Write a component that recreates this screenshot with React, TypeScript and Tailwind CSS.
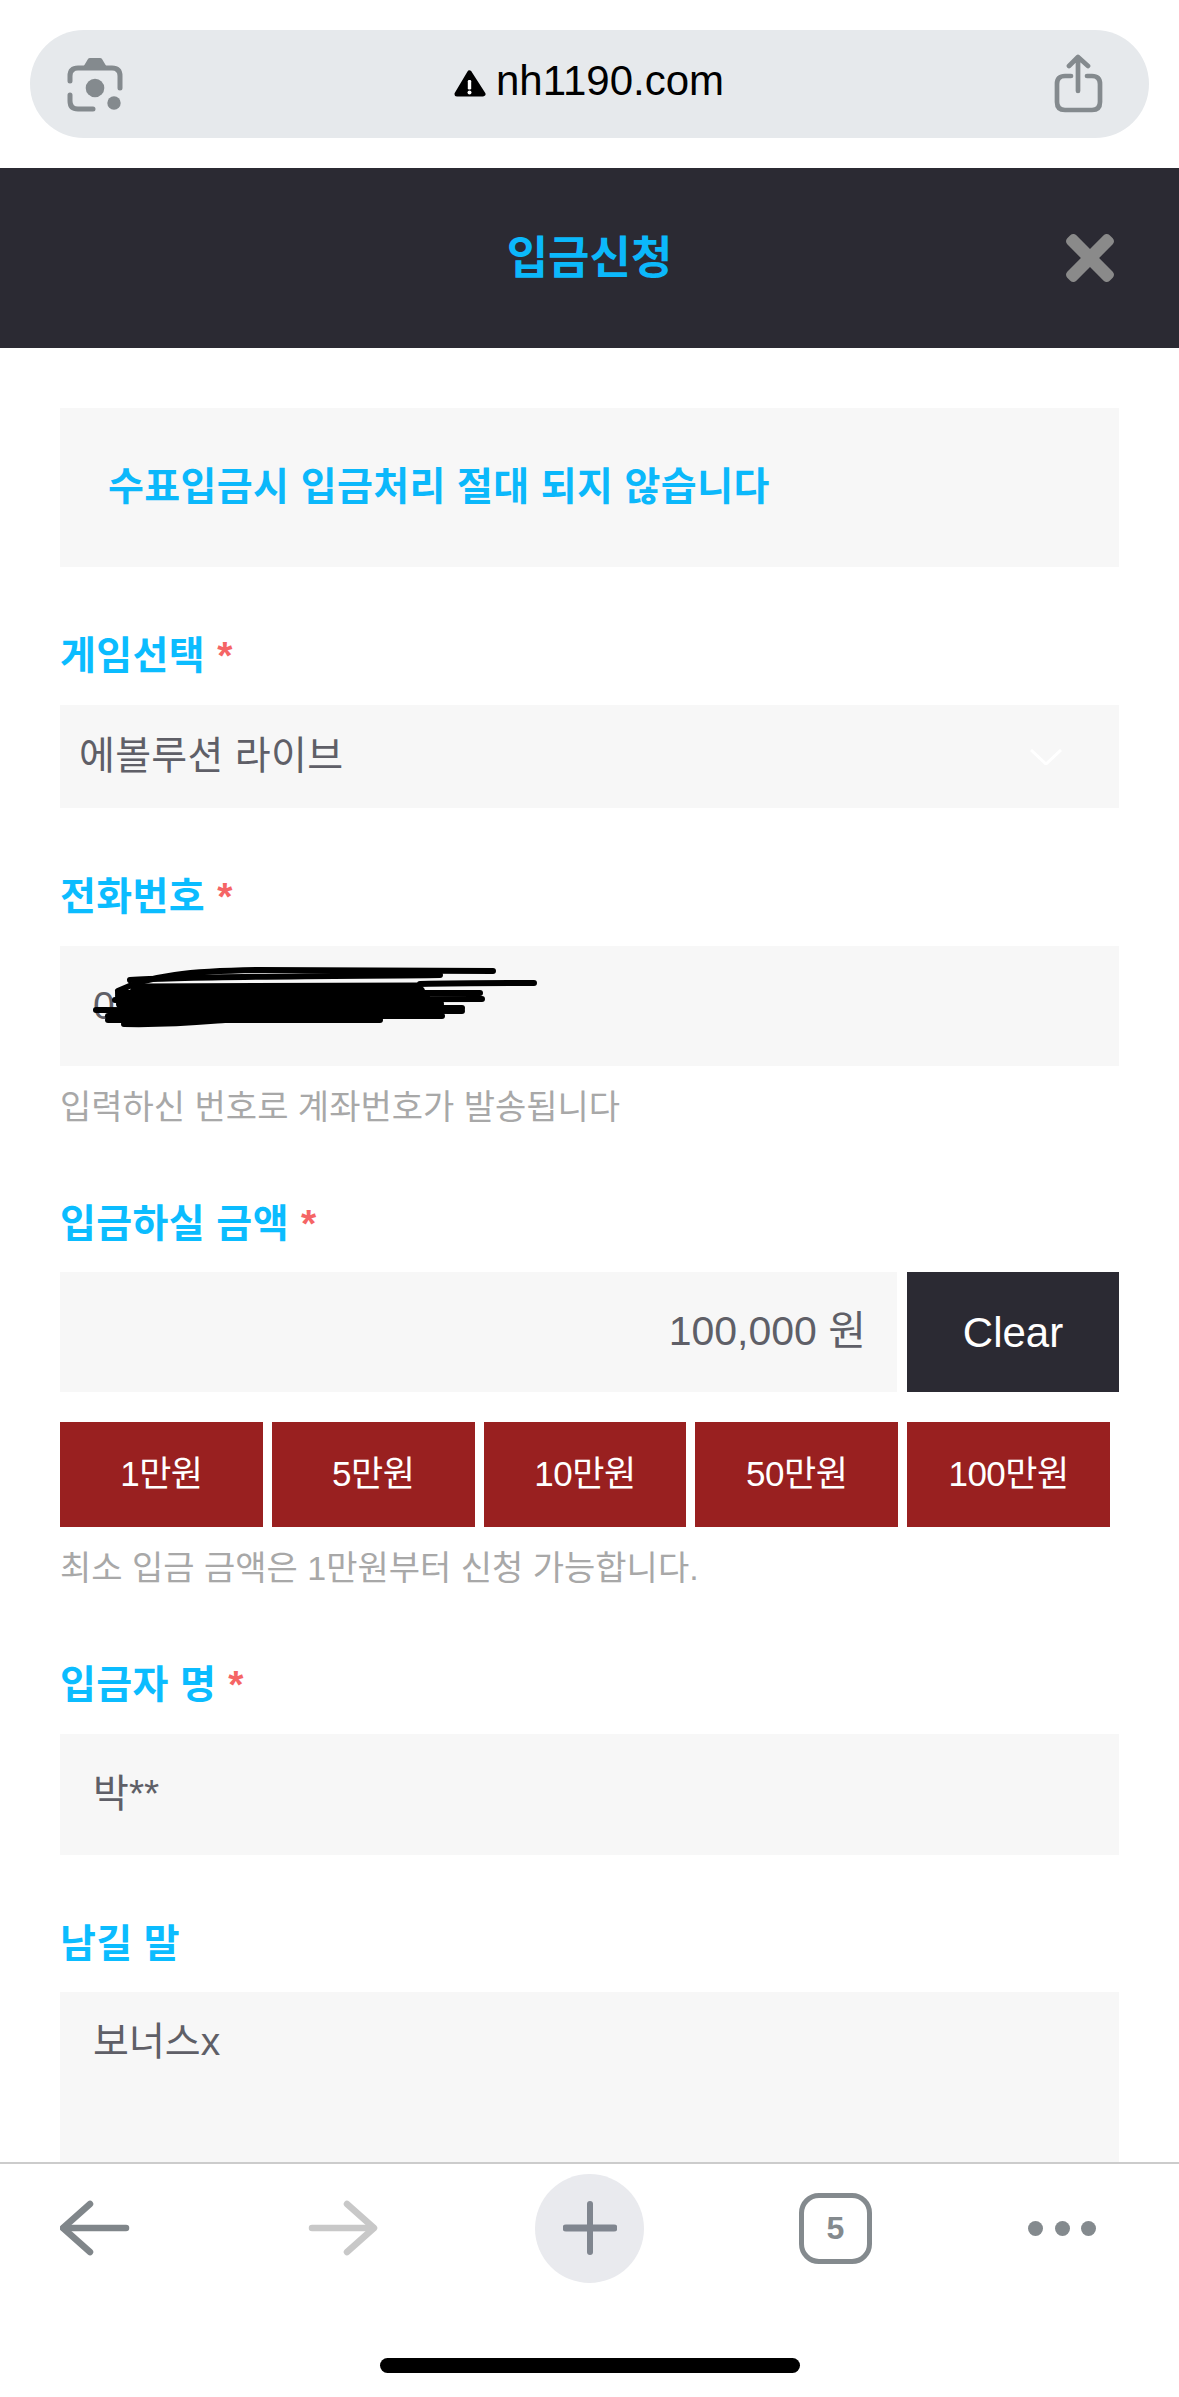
import React from "react";
import { FaTimes } from "react-icons/fa";

const KR = "font-['Liberation_Sans','Noto_Sans_CJK_KR',sans-serif]";

function Label({ text, star = true, className = "" }: { text: string; star?: boolean; className?: string }) {
  return (
    <div className={`h-[48px] text-[39px] leading-[48px] font-bold tracking-[0.4px] text-[#0bbcff] ${className}`}>
      {text}
      {star && <span className="ml-[12px] text-[#f56565]">*</span>}
    </div>
  );
}

function Field({ children, className = "" }: { children?: React.ReactNode; className?: string }) {
  return <div className={`flex items-center bg-[#f7f7f7] text-[39px] text-[#5f5f67] ${className}`}>{children}</div>;
}

function Help({ text, className = "" }: { text: string; className?: string }) {
  return <div className={`h-[44px] text-[34px] leading-[44px] text-[#a8a8a8] ${className}`}>{text}</div>;
}

function Scribble() {
  return (
    <svg className="absolute left-0 top-[4px] h-[90px] w-[520px]" viewBox="0 0 520 90" fill="none" stroke="#000" strokeWidth="6" strokeLinecap="round">
      <path d="M58 41C90 25 130 21 200 20L433 21" />
      <path d="M70 30C130 26 300 26 380 25" />
      <path d="M360 34C400 33 440 33 474 33" />
      <path d="M80 36L360 35" strokeWidth="5" />
      <path d="M58 43L420 43" />
      <path d="M55 50L422 49" />
      <path d="M60 46H365M75 41H360" strokeWidth="10" />
      <path d="M60 54H380" strokeWidth="8" />
      <path d="M80 58H402" strokeWidth="6" />
      <path d="M36 60L402 61" />
      <path d="M48 66H382" strokeWidth="6" />
      <path d="M48 70L320 70" />
      <path d="M64 74C110 75 140 72 165 70" />
    </svg>
  );
}

export default function App() {
  const amounts = ["1만원", "5만원", "10만원", "50만원", "100만원"];
  return (
    <div className={`flex h-[2397px] w-[1179px] flex-col overflow-hidden bg-white ${KR}`}>
      {/* Browser address bar */}
      <div className="flex h-[168px] shrink-0 px-[30px] pt-[30px]">
        <div className="flex h-[108px] w-full items-center justify-between rounded-[54px] bg-[#e6e9ec] pl-[36px] pr-[45px]">
          <svg width="58" height="56" viewBox="0 0 58 56" fill="none" stroke="#848a8e" strokeWidth="5" strokeLinecap="round">
            <path d="M4 25V20Q4 12 12 12H46Q54 12 54 20V32" />
            <path d="M4 39V45Q4 53 12 53H27" />
            <path d="M16 13L22 3Q22.5 2 24 2H34Q35.5 2 36 3L42 13Z" fill="#848a8e" stroke="none" />
            <circle cx="29" cy="32" r="9.3" fill="#848a8e" stroke="none" />
            <circle cx="48" cy="47" r="6.7" fill="#848a8e" stroke="none" />
          </svg>
          <div className="flex items-center gap-[10px]">
            <svg width="32" height="28" viewBox="0 0 32 28">
              <path d="M15.5 3L29 24H3Z" fill="#000" stroke="#000" strokeWidth="5" strokeLinejoin="round" />
              <rect x="13.8" y="10" width="3.4" height="9.5" rx="1.2" fill="#fff" />
              <circle cx="15.5" cy="22.5" r="2" fill="#fff" />
            </svg>
            <span className="mb-[6px] text-[42px] leading-[50px] text-black">nh1190.com</span>
          </div>
          <svg width="50" height="60" viewBox="0 0 50 60" fill="none" stroke="#848a8e" strokeWidth="4.7" strokeLinecap="round" strokeLinejoin="round">
            <path d="M17 22H11Q3 22 3 30V48Q3 56 11 56H38Q46 56 46 48V30Q46 22 38 22H33" />
            <path d="M24 37V3M15 12L24 3L34 12" />
          </svg>
        </div>
      </div>

      {/* Modal header */}
      <div className="flex h-[180px] shrink-0 items-center bg-[#2b2a33] pl-[65px] pr-[65px]">
        <div className="w-[48px]" />
        <div className="flex-1 pt-[2px] text-center text-[45px] font-bold text-[#0bb8fb]">입금신청</div>
        <FaTimes className="h-[70px] w-[48px] text-[#8a8a8a]" />
      </div>

      {/* Form */}
      <div className="min-h-0 flex-1 overflow-hidden px-[60px] pt-[60px]">
        <div className="flex h-[159px] items-center bg-[#f7f7f7] px-[48px] text-[39px] font-bold tracking-[0.4px] text-[#0bb8fb]">
          수표입금시 입금처리 절대 되지 않습니다
        </div>

        <Label text="게임선택" className="mt-[65px]" />
        <Field className="mt-[25px] h-[103px] justify-between pl-[19px] pr-[57px] tracking-[0.3px]">
          <span>에볼루션 라이브</span>
          <svg width="32" height="16" viewBox="0 0 32 16" fill="none" stroke="#fff" strokeWidth="3">
            <path d="M1 1L16 15L31 1" />
          </svg>
        </Field>

        <Label text="전화번호" className="mt-[65px]" />
        <Field className="relative mt-[25px] h-[120px] px-[33px]">
          <span>010-</span>
          <Scribble />
        </Field>
        <Help text="입력하신 번호로 계좌번호가 발송됩니다" className="mt-[19px]" />

        <Label text="입금하실 금액" className="mt-[71px]" />
        <div className="mt-[24px] flex h-[120px] gap-[10px]">
          <Field className="flex-1 justify-end pr-[31px] text-[41px]">100,000 원</Field>
          <div className="flex w-[212px] items-center justify-center bg-[#2b2a33] text-[42px] text-white">Clear</div>
        </div>
        <div className="mt-[30px] flex h-[105px] w-[1050px] gap-[9px]">
          {amounts.map((a) => (
            <div key={a} className="flex flex-1 items-center justify-center bg-[#992020] text-[35px] tracking-[-0.5px] text-white">
              {a}
            </div>
          ))}
        </div>
        <Help text="최소 입금 금액은 1만원부터 신청 가능합니다." className="mt-[19px]" />

        <Label text="입금자 명" className="mt-[71px]" />
        <Field className="mt-[25px] h-[121px] px-[33px]">박**</Field>

        <Label text="남길 말" star={false} className="mt-[65px]" />
        <Field className="mt-[24px] h-[300px] items-start px-[33px] pt-[21px]">보너스x</Field>
      </div>

      {/* Browser bottom bar */}
      <div className="flex h-[235px] shrink-0 flex-col border-t-2 border-[#cccccc] bg-white">
        <div className="flex h-[128px] items-center pl-[60px] pr-[83px]">
          <svg width="70" height="56" viewBox="0 0 70 56" fill="none" stroke="#80868a" strokeWidth="6.5" strokeLinecap="round" strokeLinejoin="round">
            <path d="M30 4L3 28L30 52" />
            <path d="M4 28H66" />
          </svg>
          <svg className="ml-[178px]" width="70" height="56" viewBox="0 0 70 56" fill="none" stroke="#c8c8c8" strokeWidth="6.5" strokeLinecap="round" strokeLinejoin="round">
            <path d="M39 4L66 28L39 52" />
            <path d="M4 28H65" />
          </svg>
          <div className="ml-[157px] flex h-[109px] w-[109px] items-center justify-center rounded-full bg-[#e9eaee]">
            <svg width="54" height="54" viewBox="0 0 54 54" stroke="#80868f" strokeLinecap="round">
              <path d="M27 3V51" strokeWidth="6" />
              <path d="M3 27H51" strokeWidth="7" />
            </svg>
          </div>
          <div className="ml-[155px] flex h-[71px] w-[73px] items-center justify-center rounded-[20px] border-[5.5px] border-[#848a8e] text-[32px] font-semibold text-[#848a8e]">
            5
          </div>
          <div className="ml-auto flex gap-[11.5px]">
            <div className="h-[15px] w-[15px] rounded-full bg-[#848a8e]" />
            <div className="h-[15px] w-[15px] rounded-full bg-[#848a8e]" />
            <div className="h-[15px] w-[15px] rounded-full bg-[#848a8e]" />
          </div>
        </div>
        <div className="mt-[66px] flex justify-center">
          <div className="h-[15px] w-[420px] rounded-full bg-black" />
        </div>
      </div>
    </div>
  );
}
